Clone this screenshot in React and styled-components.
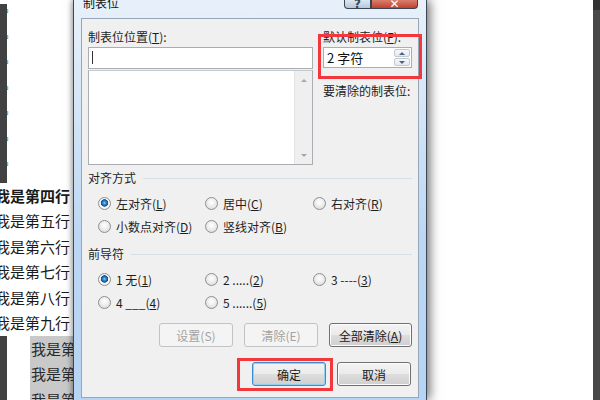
import React from 'react';
import styled, { createGlobalStyle } from 'styled-components';

const Global = createGlobalStyle`
  html, body { margin: 0; padding: 0; }
  body {
    width: 600px; height: 400px; overflow: hidden; background: #fff;
    font-family: "Noto Sans CJK SC", "Noto Sans", sans-serif;
  }
`;

const Screen = styled.div`
  display: flex;
  width: 600px;
  height: 400px;
  overflow: hidden;
`;

/* ---------- document on the left ---------- */
const DocLeft = styled.div`
  width: 73px;
  flex: none;
  overflow: hidden;
  background: #fff;
  padding-top: 4px;
  box-sizing: border-box;
  font-family: "Noto Sans CJK SC", sans-serif;
  font-size: 15px;
  color: #1a1a1a;
`;

const DocRow = styled.div`
  display: flex;
  height: 25.5px;
  line-height: 25.5px;
  white-space: nowrap;
`;

const Gutter = styled.div`
  position: relative;
  z-index: 1;
  width: 7px;
  flex: none;
  background: ${p => (p.$dark ? '#414141' : 'transparent')};
`;

const Mark = styled.span`
  margin-left: -6px;
  margin-top: -4px;
  font-family: "DejaVu Sans", sans-serif;
  font-size: 11px;
  color: #8a8a8a;
`;

const DocText = styled.span`
  margin-left: -12px;
  font-weight: ${p => (p.$bold ? 700 : 400)};
`;

const HlText = styled.span`
  margin-left: 23px;
  padding-left: 1px;
  flex: 1;
  background: #c9c9c9;
  color: #2a2a2a;
`;

/* ---------- dialog ---------- */
const Dialog = styled.div`
  position: relative;
  z-index: 2;
  width: 354px;
  height: 400px;
  flex: none;
  box-sizing: border-box;
  display: flex;
  flex-direction: column;
  padding: 0 7px 2px;
  border-left: 1px solid #3d4755;
  border-right: 1px solid #3d4755;
  background: linear-gradient(180deg, #e8f1fa 0%, #d2e4f6 30%, #bcd7f3 60%, #b6d4f3 100%);
  box-shadow: 3px 0 10px rgba(0, 0, 0, 0.55), -2px 0 4px rgba(0, 0, 0, 0.18);
`;

const TitleBar = styled.div`
  height: 18px;
  flex: none;
  display: flex;
  align-items: flex-start;
`;

const Title = styled.div`
  margin-left: 2px;
  margin-top: -3px;
  font-size: 12px;
  line-height: 12px;
  color: #111;
`;

const CaptionButtons = styled.div`
  display: flex;
  margin-left: auto;
  margin-right: 1px;
`;

const CapBtn = styled.div`
  width: ${p => p.$w}px;
  height: 9px;
  box-sizing: border-box;
  border: 1px solid #3a4554;
  border-top: none;
  border-radius: ${p => (p.$close ? '0 0 4px 0' : '0 0 0 4px')};
  background: ${p =>
    p.$close
      ? 'linear-gradient(180deg, #d8806f 0%, #c5402c 100%)'
      : 'linear-gradient(180deg, #dde7f2 0%, #b6c7da 100%)'};
  overflow: hidden;
  display: flex;
  justify-content: center;
  align-items: flex-end;
  font-family: "DejaVu Sans", sans-serif;
  font-weight: 700;
  font-size: 12px;
  line-height: 8px;
  color: ${p => (p.$close ? '#fff' : '#3b4656')};
`;

const Client = styled.div`
  flex: 1;
  display: flex;
  flex-direction: column;
  border: 1px solid #97a6b8;
  background: #f0f0f0;
  padding: 9px 6px 0;
  font-size: 12px;
  color: #1e1e1e;
`;

const TopSection = styled.div`
  display: flex;
  gap: 10px;
`;

const LeftCol = styled.div`
  width: 225px;
  display: flex;
  flex-direction: column;
`;

const RightCol = styled.div`
  position: relative;
  width: 89px;
  display: flex;
  flex-direction: column;
`;

const Label = styled.div`
  height: 17px;
  line-height: 17px;
  white-space: nowrap;
  margin-top: ${p => p.$mt || 0}px;
`;

const TextInput = styled.div`
  margin-top: 2px;
  height: 22px;
  box-sizing: border-box;
  border: 1px solid #abadb3;
  background: #fff;
  padding: 3px 0 0 3px;
`;

const Caret = styled.div`
  width: 1px;
  height: 13px;
  background: #333;
`;

const ListBox = styled.div`
  margin-top: 1px;
  height: 95px;
  box-sizing: border-box;
  border: 1px solid #abadb3;
  border-top-color: #c5c9d0;
  background: #fff;
  display: flex;
  justify-content: flex-end;
`;

const ScrollTrack = styled.div`
  width: 17px;
  background: #efefef;
  border-left: 1px solid #e4e4e4;
  display: flex;
  flex-direction: column;
  justify-content: space-between;
  align-items: center;
  padding: 8px 0 7px;
`;

const Arrow = styled.div`
  width: 0;
  height: 0;
  border-left: 3px solid transparent;
  border-right: 3px solid transparent;
  ${p => (p.$down ? 'border-top: 3px solid #a8a8a8;' : 'border-bottom: 3px solid #a8a8a8;')}
`;

const SpinBox = styled.div`
  margin-top: 2px;
  height: 21px;
  box-sizing: border-box;
  border: 1px solid #abadb3;
  background: #fff;
  display: flex;
`;

const SpinText = styled.div`
  flex: 1;
  padding-left: 3px;
  font-size: 13px;
  line-height: 19px;
  color: #111;
`;

const SpinButtons = styled.div`
  width: 16px;
  display: flex;
  flex-direction: column;
  gap: 1px;
  padding: 1px 1px 1px 0;
`;

const SpinBtn = styled.div`
  flex: 1;
  border: 1px solid #c3c9d1;
  border-radius: 2px;
  background: linear-gradient(180deg, #f6f8fa 0%, #e4e9ef 100%);
  display: flex;
  align-items: center;
  justify-content: center;
`;

const SpinArrow = styled.div`
  width: 0;
  height: 0;
  border-left: 3px solid transparent;
  border-right: 3px solid transparent;
  ${p => (p.$down ? 'border-top: 3px solid #4e6384;' : 'border-bottom: 3px solid #4e6384;')}
`;

const RedBox = styled.div`
  position: absolute;
  left: -5px;
  top: 6px;
  width: 104px;
  height: 45px;
  box-sizing: border-box;
  border: 3px solid #f2373d;
  pointer-events: none;
`;

const SectionHeader = styled.div`
  margin-top: ${p => p.$mt}px;
  height: 16px;
  display: flex;
  align-items: center;
  gap: 7px;
  line-height: 16px;
  &::after {
    content: '';
    flex: 1;
    height: 1px;
    background: #d6dfe6;
  }
`;

const RadioGrid = styled.div`
  margin-top: 6px;
  padding-left: 10px;
  display: grid;
  grid-template-columns: 107px 108px auto;
  grid-auto-rows: 23px;
`;

const RadioItem = styled.div`
  display: flex;
  align-items: center;
  gap: 5px;
  white-space: nowrap;
`;

const RadioDot = styled.span`
  width: 13px;
  height: 13px;
  flex: none;
  box-sizing: border-box;
  border-radius: 50%;
  border: 1px solid #8e8f90;
  background: ${p =>
    p.$checked
      ? 'radial-gradient(circle at 50% 45%, #8fd3fa 0, #2a8ad4 1.6px, #124f8c 3.4px, #eef0f2 4px, #f7f7f7 4.8px, #d8d8d8 100%)'
      : 'radial-gradient(circle at 50% 40%, #ffffff 0, #f2f2f2 35%, #d4d4d4 100%)'};
`;

const ButtonRow = styled.div`
  margin-top: ${p => p.$mt}px;
  margin-right: ${p => p.$mr}px;
  display: flex;
  justify-content: flex-end;
  gap: 11px;
`;

const BtnWrap = styled.div`
  position: relative;
`;

const Btn = styled.div`
  width: ${p => p.$w}px;
  height: 24px;
  box-sizing: border-box;
  border-radius: 3px;
  display: flex;
  align-items: center;
  justify-content: center;
  font-size: 12px;
  white-space: nowrap;
  border: 1px solid ${p => (p.$disabled ? '#c0c3c6' : p.$default ? '#3c8ccc' : '#707070')};
  color: ${p => (p.$disabled ? '#a3a3a3' : '#1a1a1a')};
  background: ${p =>
    p.$disabled
      ? '#f4f4f4'
      : 'linear-gradient(180deg, #f3f3f3 0%, #ebebeb 48%, #dddddd 52%, #cfcfcf 100%)'};
  box-shadow: ${p =>
    p.$disabled ? 'none' : p.$default ? 'inset 0 0 0 1px #8fd0f3' : 'inset 0 0 0 1px #fcfcfc'};
`;

const BtnRedBox = styled.div`
  position: absolute;
  left: -15px;
  top: -4px;
  width: 96px;
  height: 33px;
  box-sizing: border-box;
  border: 3px solid #f2373d;
  pointer-events: none;
`;

/* ---------- right side of the screen ---------- */
const DocRight = styled.div`
  flex: 1;
  display: flex;
  background: #fff;
`;

const RightPage = styled.div`
  flex: 1;
`;

const RightStrip = styled.div`
  width: 7px;
  flex: none;
  background: linear-gradient(180deg, #333 0, #333 10px, #484848 10px, #484848 100%);
`;

const Radio = ({ checked, children }) => (
  <RadioItem>
    <RadioDot $checked={checked} />
    <span>{children}</span>
  </RadioItem>
);

const docRows = [
  ...Array.from({ length: 7 }, () => ({ type: 'mark' })),
  { type: 'text', text: '我是第四行', bold: true },
  { type: 'text', text: '我是第五行' },
  { type: 'text', text: '我是第六行' },
  { type: 'text', text: '我是第七行' },
  { type: 'text', text: '我是第八行' },
  { type: 'text', text: '我是第九行' },
  { type: 'hl', text: '我是第十行' },
  { type: 'hl', text: '我是第十一行' },
  { type: 'hl', text: '我是第十二行' },
];

export default function App() {
  return (
    <>
      <Global />
      <Screen>
        <DocLeft>
          {docRows.map((r, i) => (
            <DocRow key={i}>
              <Gutter $dark={r.type !== 'text'} />
              {r.type === 'mark' && <Mark>↵</Mark>}
              {r.type === 'text' && <DocText $bold={r.bold}>{r.text}</DocText>}
              {r.type === 'hl' && <HlText>{r.text}</HlText>}
            </DocRow>
          ))}
        </DocLeft>

        <Dialog>
          <TitleBar>
            <Title>制表位</Title>
            <CaptionButtons>
              <CapBtn $w={27}>?</CapBtn>
              <CapBtn $w={47} $close>✕</CapBtn>
            </CaptionButtons>
          </TitleBar>

          <Client>
            <TopSection>
              <LeftCol>
                <Label>制表位位置(<u>T</u>):</Label>
                <TextInput>
                  <Caret />
                </TextInput>
                <ListBox>
                  <ScrollTrack>
                    <Arrow />
                    <Arrow $down />
                  </ScrollTrack>
                </ListBox>
              </LeftCol>
              <RightCol>
                <Label>默认制表位(<u>F</u>):</Label>
                <SpinBox>
                  <SpinText>2 字符</SpinText>
                  <SpinButtons>
                    <SpinBtn><SpinArrow /></SpinBtn>
                    <SpinBtn><SpinArrow $down /></SpinBtn>
                  </SpinButtons>
                </SpinBox>
                <Label $mt={14}>要清除的制表位:</Label>
                <RedBox />
              </RightCol>
            </TopSection>

            <SectionHeader $mt={5}>对齐方式</SectionHeader>
            <RadioGrid>
              <Radio checked>左对齐(<u>L</u>)</Radio>
              <Radio>居中(<u>C</u>)</Radio>
              <Radio>右对齐(<u>R</u>)</Radio>
              <Radio>小数点对齐(<u>D</u>)</Radio>
              <Radio>竖线对齐(<u>B</u>)</Radio>
            </RadioGrid>

            <SectionHeader $mt={8}>前导符</SectionHeader>
            <RadioGrid>
              <Radio checked>1 无(<u>1</u>)</Radio>
              <Radio>2 .....(<u>2</u>)</Radio>
              <Radio>3 ----(<u>3</u>)</Radio>
              <Radio>4 ___(<u>4</u>)</Radio>
              <Radio>5 ......(<u>5</u>)</Radio>
            </RadioGrid>

            <ButtonRow $mt={9} $mr={0}>
              <Btn $w={74} $disabled>设置(S)</Btn>
              <Btn $w={74} $disabled>清除(E)</Btn>
              <Btn $w={83}>全部清除(<u>A</u>)</Btn>
            </ButtonRow>

            <ButtonRow $mt={15} $mr={1}>
              <BtnWrap>
                <Btn $w={74} $default>确定</Btn>
                <BtnRedBox />
              </BtnWrap>
              <Btn $w={74}>取消</Btn>
            </ButtonRow>
          </Client>
        </Dialog>

        <DocRight>
          <RightPage />
          <RightStrip />
        </DocRight>
      </Screen>
    </>
  );
}
